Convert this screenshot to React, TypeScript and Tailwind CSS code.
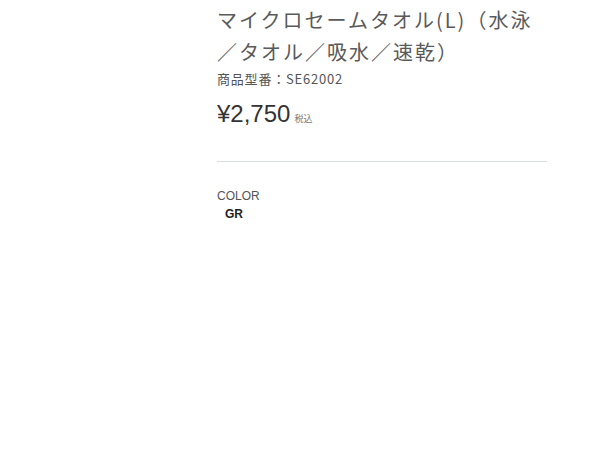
import { ReactElement } from 'react'

// product info block
function App(): ReactElement {
  return (
    <div className="w-[600px] h-[450px] bg-white overflow-hidden font-['Noto_Sans_CJK_JP','Liberation_Sans',sans-serif]">
      <div className="ml-[217px] w-[330px] pt-[4px]">
        <h1 className="text-[20px] leading-[32px] tracking-[2px] text-[#5a5a5a] font-normal">
          マイクロセームタオル(L)（水泳／タオル／吸水／速乾）
        </h1>
        <p className="text-[13px] leading-[18px] tracking-[0.8px] text-[#555] mt-[2px]">
          商品型番：SE62002
        </p>
        <div className="flex items-baseline gap-[4px] mt-[11px]">
          <span className="text-[24px] leading-[30px] text-[#333] font-['Liberation_Sans',sans-serif]">
            ¥2,750
          </span>
          <span className="text-[9px] text-[#777]">税込</span>
        </div>
        <div className="mt-[32px] border-t border-[#d6dddc]" />
        <p className="mt-[26px] text-[12px] leading-[16px] text-[#555] font-['Liberation_Sans',sans-serif]">
          COLOR
        </p>
        <p className="ml-[8px] mt-[2px] text-[12px] leading-[16px] font-bold text-[#222] font-['Liberation_Sans',sans-serif]">
          GR
        </p>
      </div>
    </div>
  )
}

export default App
